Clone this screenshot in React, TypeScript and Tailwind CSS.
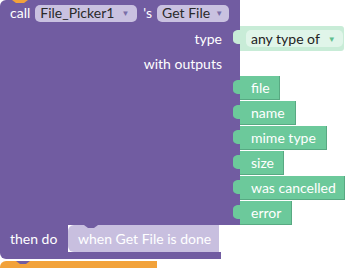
import React from "react";

const outputs = [
  { label: "file", w: "w-[40px]", h: "h-[25px]" },
  { label: "name", w: "w-[56px]", h: "h-[25px]" },
  { label: "mime type", w: "w-[87px]", h: "h-[25px]" },
  { label: "size", w: "w-[44px]", h: "h-[25px]" },
  { label: "was cancelled", w: "w-[105px]", h: "h-[25px]" },
  { label: "error", w: "w-[52px]", h: "h-[24px]" },
];

function Tab({ fill }: { fill: string }) {
  // puzzle connector sticking out to the left of a value block
  return (
    <svg width="8" height="14" viewBox="0 0 8 14" className="absolute -left-[7px] top-[4px]">
      <path d="M8 0 L8 14 L6 14 C2 14 0 12 0 10 L0 4 C0 2 2 0 6 0 Z" fill={fill} />
    </svg>
  );
}

function Pill({ text, tight }: { text: string; tight?: boolean }) {
  return (
    <div
      className={`flex h-[17px] items-center rounded-[5px] bg-[#c9c1e0] pl-[5px] text-[#2a2a2a] ${
        tight ? "gap-[5px] pr-[6px]" : "gap-[7px] pr-[8px]"
      }`}
    >
      <span>{text}</span>
      <span className="text-[8px] text-[#7a6ea8]">▼</span>
    </div>
  );
}

export default function App() {
  return (
    <div className="relative h-[268px] w-[349px] overflow-hidden bg-white font-['Lato',sans-serif] text-[14px] leading-none text-white">
      {/* notch of the block above */}
      <svg width="30" height="4" className="absolute left-0 top-0 z-10">
        <path d="M0 0 H28 L24 3 H16 L12 0 Z" fill="#f2a23a" />
      </svg>

      <div className="flex flex-col">
        {/* header row */}
        <div className="flex h-[26px] w-[240px] items-center gap-[5px] rounded-tl-[6px] bg-[#715ca1] pl-[10px]">
          <span>call</span>
          <Pill text="File_Picker1" />
          <span className="ml-[1px]">'s</span>
          <Pill text="Get File" tight />
        </div>

        {/* type row */}
        <div className="flex h-[25px]">
          <div className="flex w-[240px] items-center justify-end bg-[#715ca1] pr-[18px]">type</div>
          <div className="relative flex w-[104px] items-center rounded-r-[3px] bg-[#c8ecd7] pl-[6px]">
            <Tab fill="#c8ecd7" />
            <div className="flex h-[17px] items-center gap-[8px] rounded-[5px] bg-[#e0f5e9] pl-[5px] pr-[7px] text-[#222]">
              <span>any type of</span>
              <span className="text-[8px] text-[#5fbf8e]">▼</span>
            </div>
          </div>
        </div>

        {/* with outputs */}
        <div className="flex h-[25px] w-[240px] items-center justify-end bg-[#715ca1] pr-[18px]">with outputs</div>

        {outputs.map((o) => (
          <div key={o.label} className={`flex ${o.h}`}>
            <div className="w-[240px] bg-[#715ca1]" />
            <div
              className={`relative flex h-[24px] ${o.w} items-center border-b border-r border-[#58a982] bg-[#6cc99b] pl-[11px]`}
            >
              <Tab fill="#6cc99b" />
              {o.label}
            </div>
          </div>
        ))}

        {/* then do */}
        <div className="flex h-[27px]">
          <div className="flex w-[68px] items-center bg-[#715ca1] pl-[10px]">then do</div>
          <div className="relative flex w-[151px] items-center rounded-l-[6px] bg-[#c8bfdf] pl-[10px]">
            <svg width="14" height="4" className="absolute left-[16px] top-0">
              <path d="M0 0 L4 3 H10 L14 0 Z" fill="#715ca1" />
            </svg>
            when Get File is done
          </div>
        </div>
        <div className="h-[7px] w-[221px] rounded-bl-[6px] bg-[#715ca1]" />

        {/* next block peeking */}
        <div className="relative mt-[2px] h-[8px] w-[157px] rounded-tl-[6px] bg-[#f2a23a]">
          <svg width="14" height="4" className="absolute left-[16px] top-0">
            <path d="M0 0 L4 3 H10 L14 0 Z" fill="#715ca1" />
          </svg>
        </div>
      </div>
    </div>
  );
}
